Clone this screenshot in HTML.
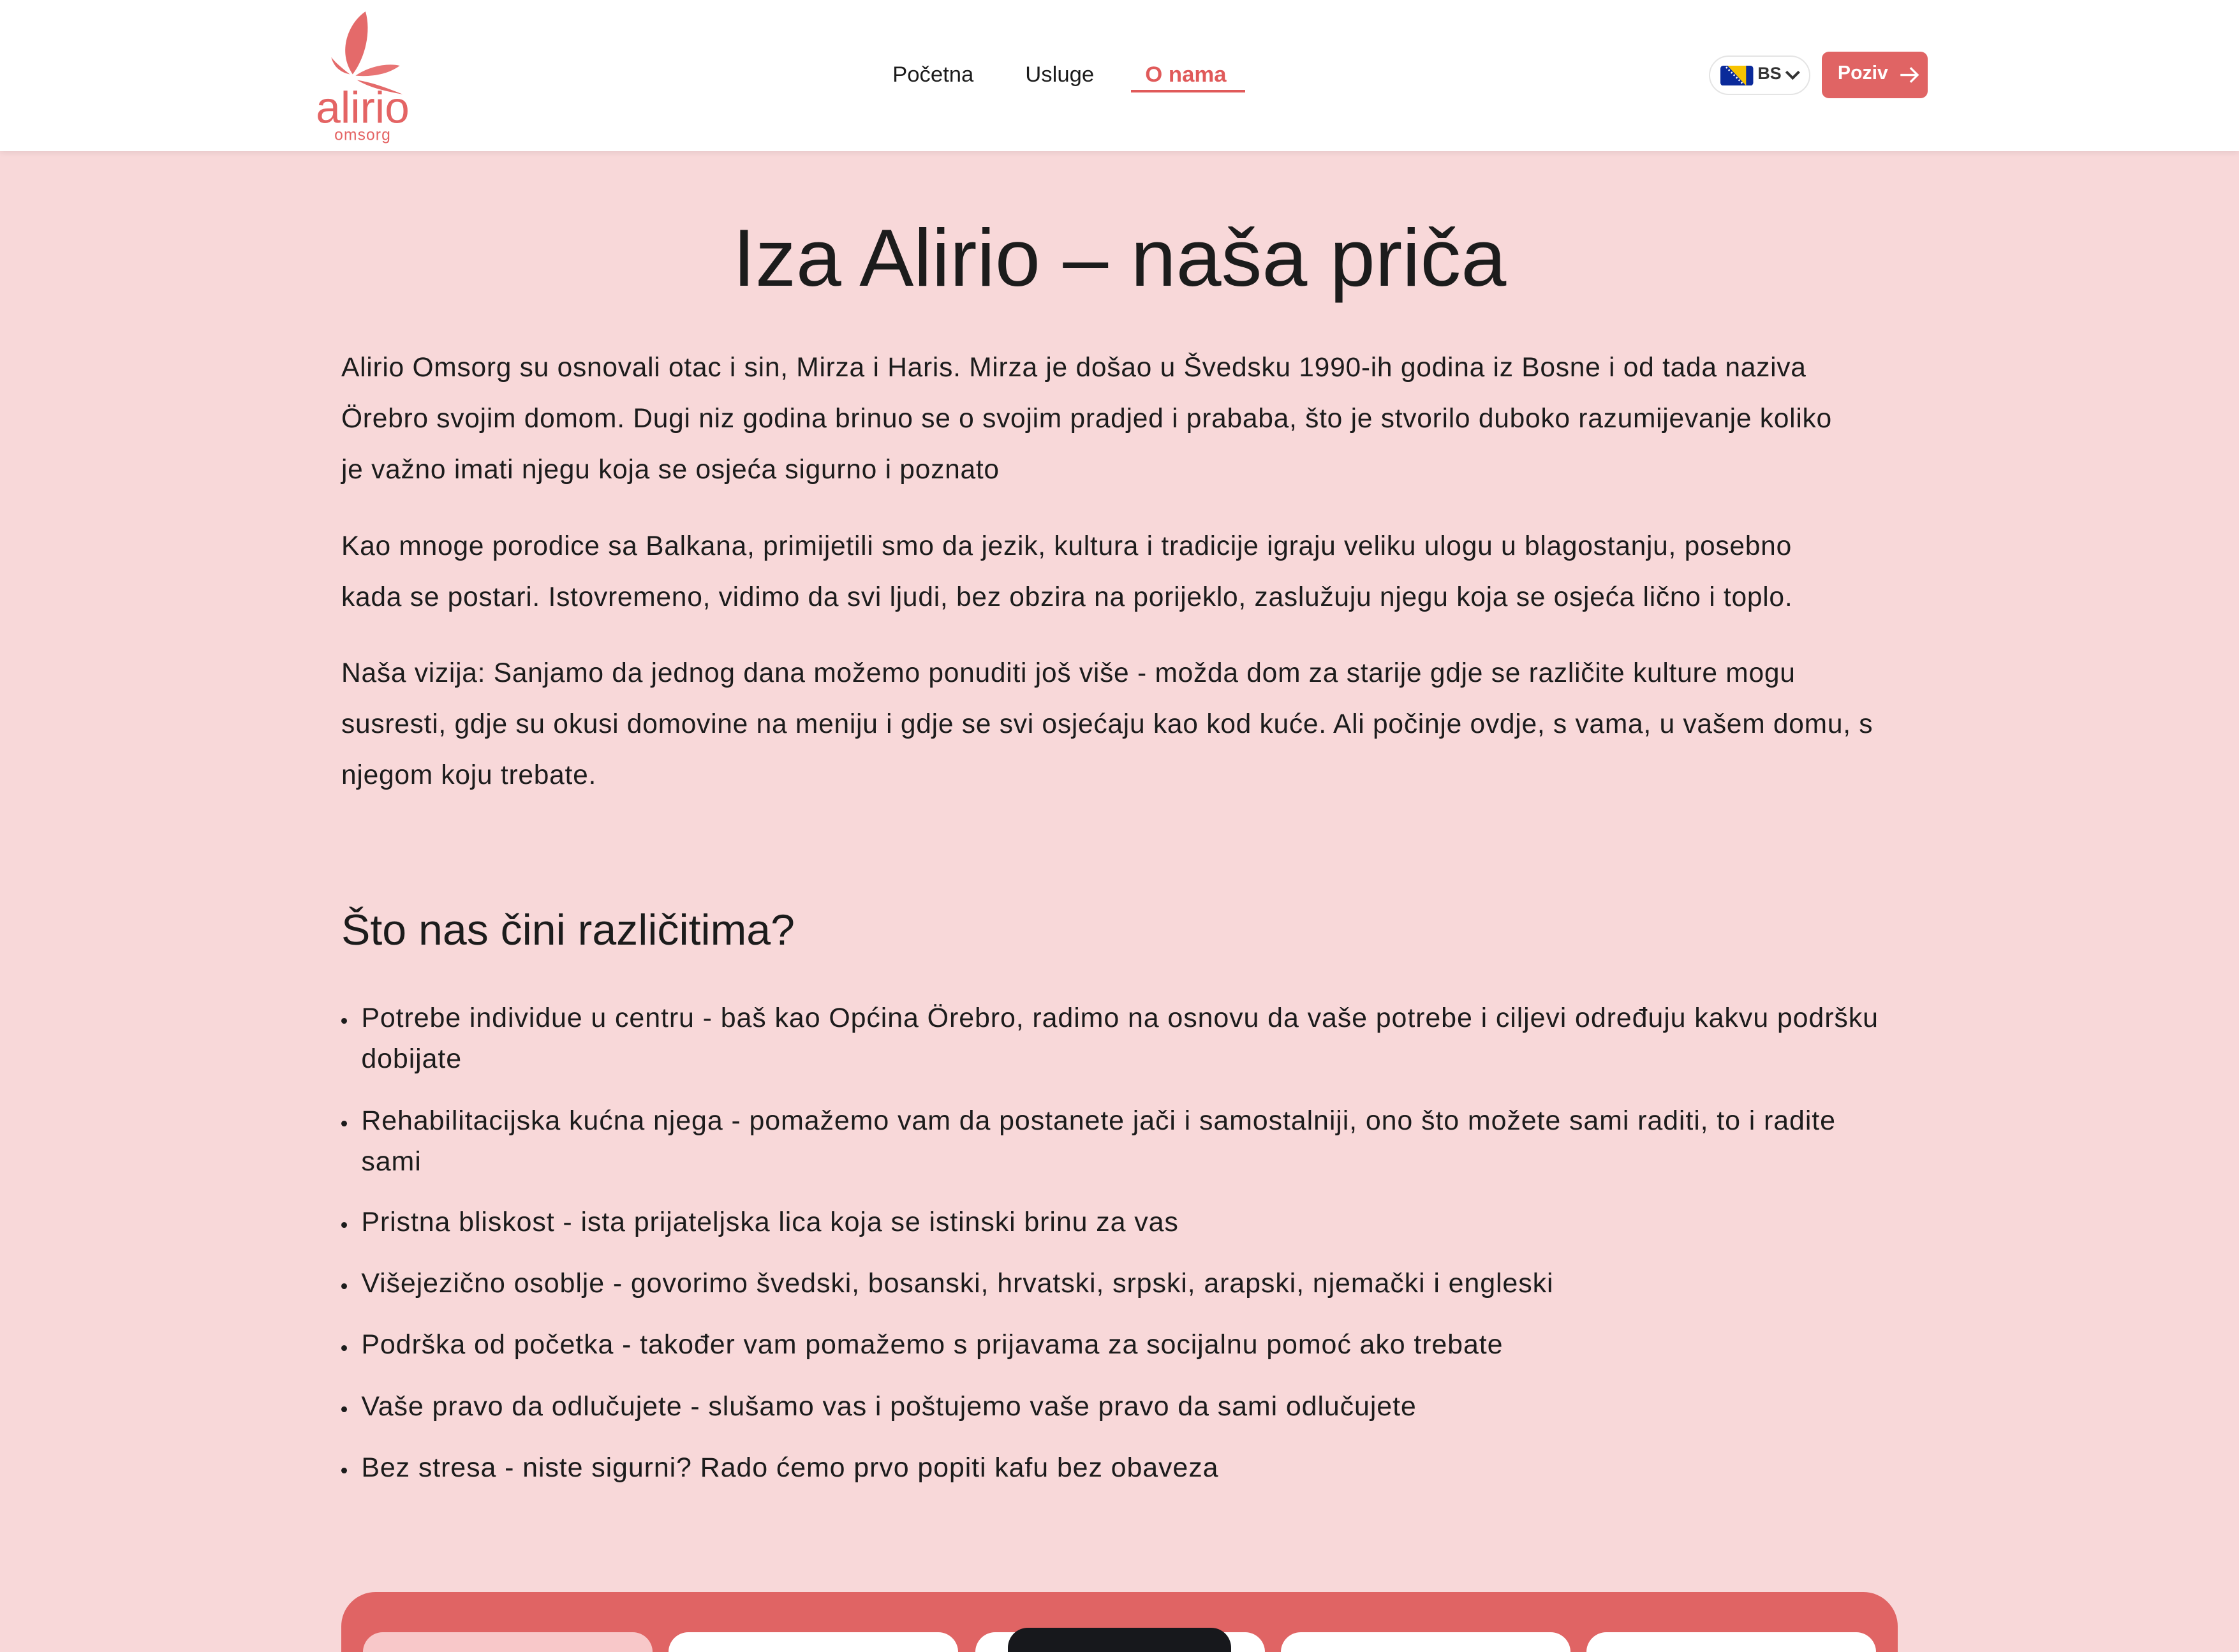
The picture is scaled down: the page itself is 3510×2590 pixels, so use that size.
<!DOCTYPE html>
<html><head><meta charset="utf-8"><style>
html,body{margin:0;padding:0;overflow:hidden;background:#f8d8d9}
.pg{width:1568px;height:1157px;overflow:hidden;zoom:2.2385;background:#f8d8d9;font-family:"Liberation Sans",sans-serif;color:#1c1c1c;position:relative}
.hdr{position:absolute;left:0;top:0;width:1568px;height:106px;background:#fff;box-shadow:0 1px 4px rgba(0,0,0,.08)}
.nav a{position:absolute;top:44px;font-size:15.5px;color:#1c1c1c;text-decoration:none}
.lang{position:absolute;left:1197px;top:39px;width:69px;height:26px;border:1px solid #e4e4e4;border-radius:14px;background:#fff}
.btn{position:absolute;left:1276px;top:36px;width:74px;height:33px;background:#e06464;border-radius:5px;color:#fff;font-size:13.5px;font-weight:bold}
h1{position:absolute;left:0;width:1568px;top:148px;margin:0;text-align:center;font-weight:normal;font-size:57px;color:#1c1c1c}
.p{position:absolute;left:239px;font-size:19px;letter-spacing:.33px;line-height:35.7px;white-space:nowrap}
h2{position:absolute;left:239px;top:634px;margin:0;font-weight:normal;font-size:30.4px}
.li{position:absolute;left:253px;font-size:19.2px;letter-spacing:.4px;line-height:28.5px;white-space:nowrap}
.li:before{content:"";position:absolute;left:-14px;top:14px;width:4px;height:4px;border-radius:50%;background:#1c1c1c}
.box{position:absolute;left:239px;top:1115px;width:1090px;height:42px;background:#e06464;border-radius:24px 24px 0 0}
.card{position:absolute;top:1143px;width:203px;height:14px;background:#fff;border-radius:14px 14px 0 0}
</style></head><body><div class="pg">
<div class="hdr">
<svg style="position:absolute;left:214px;top:4px" width="80" height="100" viewBox="0 0 80 100">
<path d="M33 48 C22 32 30 12 42 4 C46 18 42 36 33 48Z" fill="#e46a6a"/>
<path d="M18 36 C20 44 26 47 31 48 C26 44 21 40 18 36Z" fill="#e46a6a"/>
<path d="M35 49 C45 42 58 40 66 42 C58 48 46 50 35 49Z" fill="#e87474"/>
<path d="M36 52 C48 54 58 58 68 62 C56 60 44 57 36 52Z" fill="#e46a6a"/>
<text x="40" y="82" text-anchor="middle" font-family="Liberation Sans" font-size="31" fill="#e46464">alirio</text>
<text x="40" y="94" text-anchor="middle" font-family="Liberation Sans" font-size="11" fill="#e46464" letter-spacing="0.5">omsorg</text>
</svg>
<div class="nav"><a style="left:625px">Početna</a><a style="left:718px">Usluge</a><a style="left:802px;color:#e05a5a;font-weight:bold">O nama</a></div>
<div style="position:absolute;left:792px;top:63px;width:80px;height:2px;background:#e05a5a"></div>
<div class="lang"><svg style="position:absolute;left:7px;top:6px" width="23" height="14" viewBox="0 0 23 14"><rect width="23" height="14" rx="2" fill="#0a2a9a"/><path d="M5 0H18V14Z" fill="#f7c300"/><path d="M4 1L16 13" stroke="#fff" stroke-width="1.2" stroke-dasharray="1 1.5"/></svg><span style="position:absolute;left:33px;top:5px;font-size:12px;font-weight:bold;color:#333">BS</span><svg style="position:absolute;left:52px;top:9px" width="11" height="8" viewBox="0 0 11 8"><path d="M1 1.5L5.5 6L10 1.5" stroke="#333" stroke-width="1.8" fill="none"/></svg></div>
<div class="btn"><span style="position:absolute;left:11px;top:8px">Poziv</span><svg style="position:absolute;left:54px;top:10px" width="15" height="13" viewBox="0 0 15 13"><path d="M1 6.5H13M8 1.5L13 6.5L8 11.5" stroke="#fff" stroke-width="1.5" fill="none"/></svg></div>
</div>
<h1>Iza Alirio – naša priča</h1>
<div class="p" style="top:240px">Alirio Omsorg su osnovali otac i sin, Mirza i Haris. Mirza je došao u Švedsku 1990-ih godina iz Bosne i od tada naziva<br>Örebro svojim domom. Dugi niz godina brinuo se o svojim pradjed i prababa, što je stvorilo duboko razumijevanje koliko<br>je važno imati njegu koja se osjeća sigurno i poznato</div>
<div class="p" style="top:365px">Kao mnoge porodice sa Balkana, primijetili smo da jezik, kultura i tradicije igraju veliku ulogu u blagostanju, posebno<br>kada se postari. Istovremeno, vidimo da svi ljudi, bez obzira na porijeklo, zaslužuju njegu koja se osjeća lično i toplo.</div>
<div class="p" style="top:454px">Naša vizija: Sanjamo da jednog dana možemo ponuditi još više - možda dom za starije gdje se različite kulture mogu<br>susresti, gdje su okusi domovine na meniju i gdje se svi osjećaju kao kod kuće. Ali počinje ovdje, s vama, u vašem domu, s<br>njegom koju trebate.</div>
<h2>Što nas čini različitima?</h2>
<div class="li" style="top:699px">Potrebe individue u centru - baš kao Općina Örebro, radimo na osnovu da vaše potrebe i ciljevi određuju kakvu podršku<br>dobijate</div>
<div class="li" style="top:771px">Rehabilitacijska kućna njega - pomažemo vam da postanete jači i samostalniji, ono što možete sami raditi, to i radite<br>sami</div>
<div class="li" style="top:842px">Pristna bliskost - ista prijateljska lica koja se istinski brinu za vas</div>
<div class="li" style="top:885px">Višejezično osoblje - govorimo švedski, bosanski, hrvatski, srpski, arapski, njemački i engleski</div>
<div class="li" style="top:928px">Podrška od početka - također vam pomažemo s prijavama za socijalnu pomoć ako trebate</div>
<div class="li" style="top:971px">Vaše pravo da odlučujete - slušamo vas i poštujemo vaše pravo da sami odlučujete</div>
<div class="li" style="top:1014px">Bez stresa - niste sigurni? Rado ćemo prvo popiti kafu bez obaveza</div>
<div class="box"></div>
<div class="card" style="left:254px;background:#f8c8c9"></div>
<div class="card" style="left:468px"></div>
<div class="card" style="left:683px"></div>
<div class="card" style="left:706px;top:1140px;width:156px;height:17px;background:#17181c"></div>
<div class="card" style="left:897px"></div>
<div class="card" style="left:1111px"></div>
</div></body></html>
